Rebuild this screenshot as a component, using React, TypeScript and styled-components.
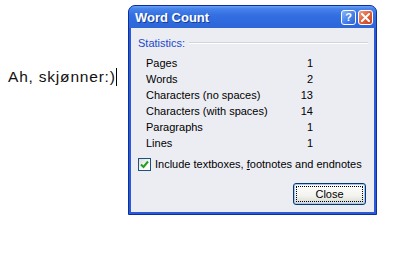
import React from 'react'
import styled, { createGlobalStyle } from 'styled-components'

const Global = createGlobalStyle`
  html, body { margin: 0; padding: 0; background: #ffffff; }
  body { width: 402px; height: 260px; overflow: hidden; }
`

const stats = [
  { label: 'Pages', value: 1 },
  { label: 'Words', value: 2 },
  { label: 'Characters (no spaces)', value: 13 },
  { label: 'Characters (with spaces)', value: 14 },
  { label: 'Paragraphs', value: 1 },
  { label: 'Lines', value: 1 },
]

const App = () => {
  return (
    <>
      <Global />
      <Page>
        <DocText>
          Ah, skjønner:)<Caret />
        </DocText>
        <Dialog>
          <TitleBar>
            <Title>Word Count</Title>
            <Captions>
              <CapButton kind="help">?</CapButton>
              <CapButton kind="close">
                <svg width="9" height="9" viewBox="0 0 9 9">
                  <path d="M1 1 L8 8 M8 1 L1 8" stroke="#fff" strokeWidth="2" strokeLinecap="square" />
                </svg>
              </CapButton>
            </Captions>
          </TitleBar>
          <Body>
            <GroupHead>
              <span>Statistics:</span>
              <Rule />
            </GroupHead>
            <StatsGrid>
              {stats.map((s) => (
                <React.Fragment key={s.label}>
                  <Label>{s.label}</Label>
                  <Value>{s.value}</Value>
                </React.Fragment>
              ))}
            </StatsGrid>
            <CheckRow>
              <CheckBox>
                <svg width="9" height="9" viewBox="0 0 9 9">
                  <path d="M1 4.5 L3.5 7 L8 1.5" stroke="#21a121" strokeWidth="2" fill="none" />
                </svg>
              </CheckBox>
              <span>
                Include textboxes, <u>f</u>ootnotes and endnotes
              </span>
            </CheckRow>
            <Footer>
              <CloseButton>
                <Focus>Close</Focus>
              </CloseButton>
            </Footer>
          </Body>
        </Dialog>
      </Page>
    </>
  )
}

const Page = styled.div`
  display: flex;
  align-items: flex-start;
  width: 402px;
  height: 260px;
`

const DocText = styled.div`
  width: 120px;
  padding: 68px 0 0 8px;
  font-family: 'Liberation Sans', Arial, sans-serif;
  font-size: 15.5px;
  letter-spacing: 0.8px;
  color: #111;
  display: flex;
  align-items: center;
  white-space: nowrap;
`

const Caret = styled.span`
  display: inline-block;
  width: 1px;
  height: 18px;
  background: #000;
`

const Dialog = styled.div`
  margin-top: 5px;
  width: 249px;
  height: 210px;
  box-sizing: border-box;
  display: flex;
  flex-direction: column;
  background: #2a5ad8;
  border: 1px solid #0b2f9e;
  border-radius: 7px 7px 0 0;
  padding: 0 2px 2px 2px;
  font-family: 'Liberation Sans', Arial, sans-serif;
  font-size: 11px;
`

const TitleBar = styled.div`
  height: 22px;
  display: flex;
  align-items: center;
  justify-content: space-between;
  padding: 0 3px 0 6px;
  margin: 0 -2px;
  border-radius: 6px 6px 0 0;
  background: linear-gradient(
    to bottom,
    #6ea2f4 0%,
    #4684ec 12%,
    #3470e2 40%,
    #2d68dc 80%,
    #2f66d6 100%
  );
`

const Title = styled.div`
  color: #fff;
  font-weight: bold;
  font-size: 13px;
  text-shadow: 1px 1px 0 #1a3c96;
`

const Captions = styled.div`
  display: flex;
  gap: 2px;
`

const CapButton = styled.div<{ kind: 'help' | 'close' }>`
  width: 15px;
  height: 15px;
  box-sizing: border-box;
  display: flex;
  align-items: center;
  justify-content: center;
  border: 1px solid #ffffff;
  border-radius: 3px;
  color: #fff;
  font-weight: bold;
  font-size: 11px;
  background: ${(p) =>
    p.kind === 'close'
      ? 'linear-gradient(135deg, #f3a58a 0%, #e2643c 45%, #c8421c 100%)'
      : 'linear-gradient(135deg, #8cb6f8 0%, #4a84ec 50%, #2e62d6 100%)'};
`

const Body = styled.div`
  flex: 1;
  display: flex;
  flex-direction: column;
  background: #ecedf3;
  padding: 8px 6px 0 6px;
  color: #000;
`

const GroupHead = styled.div`
  display: flex;
  align-items: center;
  gap: 4px;
  height: 14px;
  color: #1c48c8;
  padding-left: 1px;
`

const Rule = styled.div`
  flex: 1;
  height: 1px;
  background: #d0d4e2;
  border-bottom: 1px solid #fff;
`

const StatsGrid = styled.div`
  display: grid;
  grid-template-columns: 1fr auto;
  grid-auto-rows: 16px;
  align-items: center;
  width: 167px;
  margin: 5px 0 0 9px;
`

const Label = styled.div``

const Value = styled.div`
  text-align: right;
`

const CheckRow = styled.div`
  display: flex;
  align-items: center;
  gap: 4px;
  margin-top: 5px;
  height: 16px;
  padding-left: 1px;
`

const CheckBox = styled.div`
  width: 13px;
  height: 13px;
  box-sizing: border-box;
  border: 1px solid #1c5180;
  background: linear-gradient(135deg, #dcdcd6 0%, #fff 70%);
  display: flex;
  align-items: center;
  justify-content: center;
`

const Footer = styled.div`
  display: flex;
  justify-content: flex-end;
  margin-top: 11px;
  padding-right: 2px;
`

const CloseButton = styled.div`
  width: 73px;
  height: 22px;
  box-sizing: border-box;
  border: 1px solid #003c74;
  border-radius: 3px;
  background: linear-gradient(to bottom, #ffffff 0%, #f2f2ee 60%, #d8d8d0 100%);
  box-shadow: inset 0 0 0 1px #a9c3f5;
  padding: 2px;
  display: flex;
`

const Focus = styled.div`
  flex: 1;
  display: flex;
  align-items: center;
  justify-content: center;
  border: 1px dotted #000;
  font-size: 11px;
`

export default App
